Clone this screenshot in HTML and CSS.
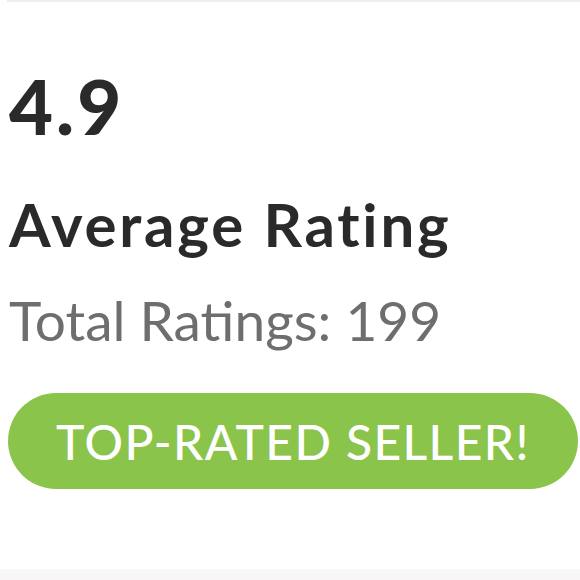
FILE: index.html
```html
<!DOCTYPE html>
<html>
<head>
<meta charset="utf-8">
<link rel="stylesheet" href="styles.css">
</head>
<body>
<div class="card">
  <div class="score">4.9</div>
  <div class="title">Average Rating</div>
  <div class="total">Total Ratings: 199</div>
  <div class="badge">TOP-RATED SELLER!</div>
</div>
<div class="footer"></div>
</body>
</html>
```
FILE: styles.css
```css
html, body {
  margin: 0;
  padding: 0;
  background: #ffffff;
}
body {
  width: 580px;
  height: 580px;
  overflow: hidden;
  font-family: "Lato", "Liberation Sans", sans-serif;
}
.card {
  margin-left: 7px;
  height: 569px;
  border-top: 2px solid #efeeee;
  box-sizing: border-box;
  padding-left: 2px;
  display: flex;
  flex-direction: column;
}
.score {
  margin-top: 56px;
  font-size: 76px;
  line-height: 96px;
  font-weight: 900;
  letter-spacing: 3px;
  color: #2a2a2a;
}
.title {
  margin-top: 30px;
  font-size: 60px;
  line-height: 80px;
  font-weight: 700;
  letter-spacing: 2.8px;
  color: #2a2a2a;
}
.total {
  margin-top: 16px;
  font-size: 55px;
  line-height: 80px;
  font-weight: 400;
  color: #6e6e6e;
}
.badge {
  margin-top: 33px;
  margin-left: -1px;
  width: 570px;
  height: 96px;
  border-radius: 48px;
  background: #8bc44b;
  color: #ffffff;
  font-size: 48px;
  font-weight: 500;
  letter-spacing: 1.4px;
  display: flex;
  align-items: center;
  justify-content: center;
}
.footer {
  height: 11px;
  background: #f8f6f6;
}
```
